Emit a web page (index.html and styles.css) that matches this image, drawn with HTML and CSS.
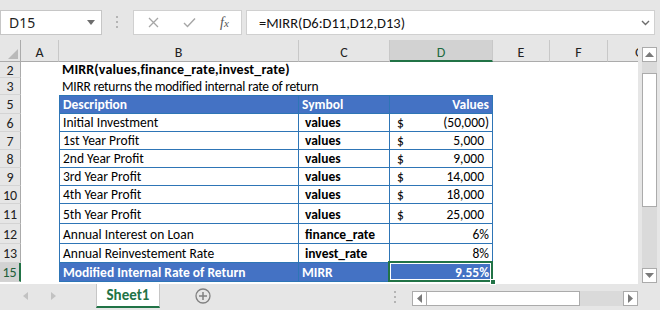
FILE: index.html
```html
<!DOCTYPE html>
<html>
<head>
<meta charset="utf-8">
<link rel="stylesheet" href="styles.css">
</head>
<body>
<div class="app">
  <div class="toolbar">
    <div class="namebox"><span>D15</span><svg width="8" height="5" viewBox="0 0 8 5"><path d="M0 0H8L4 5Z" fill="#6d6d6d"/></svg></div>
    <div class="grip"><svg width="3" height="13" viewBox="0 0 3 13"><rect x="0" y="0" width="2" height="2" fill="#b4b4b4"/><rect x="0" y="5" width="2" height="2" fill="#b4b4b4"/><rect x="0" y="10" width="2" height="2" fill="#b4b4b4"/></svg></div>
    <div class="fxbtns">
      <svg class="ico-x" width="11" height="11" viewBox="0 0 11 11"><path d="M1 1L10 10M10 1L1 10" stroke="#a6a6a6" stroke-width="1.3"/></svg>
      <svg class="ico-ok" width="13" height="11" viewBox="0 0 13 11"><path d="M1 6L4.5 9.5L12 1.5" stroke="#a6a6a6" stroke-width="1.4" fill="none"/></svg>
      <span class="fx">f<span class="fxx">x</span></span>
    </div>
    <div class="formula"><span>=MIRR(D6:D11,D12,D13)</span><svg width="9" height="6" viewBox="0 0 9 6"><path d="M1 1L4.5 4.5L8 1" stroke="#6d6d6d" stroke-width="1.4" fill="none"/></svg></div>
  </div>

  <div class="main">
    <div class="sheet">
      <div class="row hdr">
        <div class="rh corner"><svg width="10" height="10" viewBox="0 0 10 10"><path d="M10 0V10H0Z" fill="#b9b9b9"/></svg></div>
        <div class="ch ca">A</div>
        <div class="ch cb">B</div>
        <div class="ch cc">C</div>
        <div class="ch cd sel">D</div>
        <div class="ch ce">E</div>
        <div class="ch cf">F</div>
        <div class="ch cg">G</div>
      </div>

      <div class="row h16">
        <div class="rh">2</div><div class="ca"></div>
        <div class="cb c bold title t2">MIRR(values,finance_rate,invest_rate)</div>
        <div class="cc"></div><div class="cd"></div><div class="ce"></div><div class="cf"></div><div class="cg"></div>
      </div>
      <div class="row h17">
        <div class="rh">3</div><div class="ca"></div>
        <div class="cb c title t3">MIRR returns the modified internal rate of return</div>
        <div class="cc"></div><div class="cd"></div><div class="ce"></div><div class="cf"></div><div class="cg"></div>
      </div>

      <div class="row h19">
        <div class="rh">5</div><div class="ca"></div>
        <div class="cb c t top blue bold">Description</div>
        <div class="cc c t top blue bold">Symbol</div>
        <div class="cd c t top blue bold right">Values</div>
        <div class="ce"></div><div class="cf"></div><div class="cg"></div>
      </div>

      <div class="row h18">
        <div class="rh">6</div><div class="ca"></div>
        <div class="cb c t">Initial Investment</div>
        <div class="cc c t bold sym">values</div>
        <div class="cd c t acct"><span>$</span><span>(50,000)</span></div>
        <div class="ce"></div><div class="cf"></div><div class="cg"></div>
      </div>
      <div class="row h18">
        <div class="rh">7</div><div class="ca"></div>
        <div class="cb c t">1st Year Profit</div>
        <div class="cc c t bold sym">values</div>
        <div class="cd c t acct"><span>$</span><span class="pos">5,000</span></div>
        <div class="ce"></div><div class="cf"></div><div class="cg"></div>
      </div>
      <div class="row h18">
        <div class="rh">8</div><div class="ca"></div>
        <div class="cb c t">2nd Year Profit</div>
        <div class="cc c t bold sym">values</div>
        <div class="cd c t acct"><span>$</span><span class="pos">9,000</span></div>
        <div class="ce"></div><div class="cf"></div><div class="cg"></div>
      </div>
      <div class="row h18">
        <div class="rh">9</div><div class="ca"></div>
        <div class="cb c t">3rd Year Profit</div>
        <div class="cc c t bold sym">values</div>
        <div class="cd c t acct"><span>$</span><span class="pos">14,000</span></div>
        <div class="ce"></div><div class="cf"></div><div class="cg"></div>
      </div>
      <div class="row h18">
        <div class="rh">10</div><div class="ca"></div>
        <div class="cb c t">4th Year Profit</div>
        <div class="cc c t bold sym">values</div>
        <div class="cd c t acct"><span>$</span><span class="pos">18,000</span></div>
        <div class="ce"></div><div class="cf"></div><div class="cg"></div>
      </div>
      <div class="row h20">
        <div class="rh">11</div><div class="ca"></div>
        <div class="cb c t">5th Year Profit</div>
        <div class="cc c t bold sym">values</div>
        <div class="cd c t acct"><span>$</span><span class="pos">25,000</span></div>
        <div class="ce"></div><div class="cf"></div><div class="cg"></div>
      </div>
      <div class="row h20">
        <div class="rh">12</div><div class="ca"></div>
        <div class="cb c t">Annual Interest on Loan</div>
        <div class="cc c t bold sym">finance_rate</div>
        <div class="cd c t right">6%</div>
        <div class="ce"></div><div class="cf"></div><div class="cg"></div>
      </div>
      <div class="row h19">
        <div class="rh">13</div><div class="ca"></div>
        <div class="cb c t">Annual Reinvestement Rate</div>
        <div class="cc c t bold sym">invest_rate</div>
        <div class="cd c t right">8%</div>
        <div class="ce"></div><div class="cf"></div><div class="cg"></div>
      </div>
      <div class="row h19">
        <div class="rh selrow">15</div><div class="ca"></div>
        <div class="cb c t blue bold">Modified Internal Rate of Return</div>
        <div class="cc c t blue bold">MIRR</div>
        <div class="cd c t blue bold right active">9.55%<span class="selbox"></span><span class="handle"></span></div>
        <div class="ce"></div><div class="cf"></div><div class="cg"></div>
      </div>
    </div>

    <div class="vscroll">
      <div class="sbtn"><svg width="9" height="5" viewBox="0 0 9 5"><path d="M0 5H9L4.5 0Z" fill="#7a7a7a"/></svg></div>
      <div class="vtrack"><div class="vthumb"></div></div>
      <div class="sbtn"><svg width="9" height="5" viewBox="0 0 9 5"><path d="M0 0H9L4.5 5Z" fill="#7a7a7a"/></svg></div>
    </div>
  </div>

  <div class="bottom">
    <div class="nav">
      <svg width="5" height="8" viewBox="0 0 5 8"><path d="M5 0V8L0 4Z" fill="#c2c2c2"/></svg>
      <svg width="5" height="8" viewBox="0 0 5 8"><path d="M0 0V8L5 4Z" fill="#c2c2c2"/></svg>
    </div>
    <div class="tab">Sheet1</div>
    <div class="add"><svg width="16" height="16" viewBox="0 0 16 16"><circle cx="8" cy="8" r="7" fill="none" stroke="#808080" stroke-width="1.3"/><path d="M8 4V12M4 8H12" stroke="#808080" stroke-width="1.5"/></svg></div>
    <div class="hgrip"><svg width="2" height="12" viewBox="0 0 2 12"><rect x="0" y="0" width="2" height="2" fill="#b4b4b4"/><rect x="0" y="5" width="2" height="2" fill="#b4b4b4"/><rect x="0" y="10" width="2" height="2" fill="#b4b4b4"/></svg></div>
    <div class="hscroll">
      <div class="sbtn h"><svg width="5" height="9" viewBox="0 0 5 9"><path d="M5 0V9L0 4.5Z" fill="#7a7a7a"/></svg></div>
      <div class="hthumb"></div>
      <div class="htrack"></div>
      <div class="sbtn h"><svg width="5" height="9" viewBox="0 0 5 9"><path d="M0 0V9L5 4.5Z" fill="#7a7a7a"/></svg></div>
    </div>
  </div>
</div>
</body>
</html>
```

FILE: styles.css
```css
* { box-sizing: border-box; }
html, body { margin: 0; padding: 0; }
body {
  width: 660px;
  height: 310px;
  overflow: hidden;
  background: #e6e6e6;
  font-family: Carlito, Lato, "Liberation Sans", sans-serif;
  color: #000;
}
.app { display: flex; flex-direction: column; height: 310px; }

/* toolbar */
.toolbar { height: 40px; display: flex; align-items: flex-start; padding-top: 10px; }
.namebox {
  width: 102px; height: 25px; background: #fff; border: 1px solid #c6c6c6;
  display: flex; align-items: center; justify-content: space-between;
  padding: 0 6px 0 8px; font: 14px "Noto Sans", sans-serif; color: #222;
}
.grip { width: 31px; height: 25px; display: flex; align-items: center; justify-content: center; }
.fxbtns {
  width: 109px; height: 25px; background: #fff; border: 1px solid #d0d0d0;
  display: flex; align-items: center; padding-left: 14px;
}
.ico-ok { margin-left: 24px; }
.fx { margin-left: 24px; font: italic 14px "Liberation Serif", serif; color: #555; }
.fxx { font-size: 11px; }
.formula {
  margin-left: 4px; width: 409px; height: 25px; background: #fff; border: 1px solid #d0d0d0;
  display: flex; align-items: center; justify-content: space-between;
  padding: 0 4px 0 12px; font-size: 14.5px; color: #111;
}

/* main */
.main { height: 244px; display: flex; }
.sheet { width: 638px; background: #fff; }
.row { display: flex; }
.row > div { flex: none; }
.hdr { height: 22px; }
.h16 { height: 16px; }
.h17 { height: 17px; }
.h18 { height: 18px; }
.h19 { height: 19px; }
.h20 { height: 20px; }

.rh {
  width: 21px; background: #e6e6e6; border-right: 1px solid #ababab; border-bottom: 1px solid #d4d4d4;
  display: flex; align-items: center; justify-content: center; font-size: 14px; color: #222;
  padding-top: 1px;
}
.corner { align-items: flex-end; justify-content: flex-end; padding: 0 2px 2px 0; border-bottom: 1px solid #ababab; }
.ca { width: 38px; }
.cb { width: 240px; }
.cc { width: 91px; }
.cd { width: 103px; }
.ce { width: 57px; }
.cf { width: 58px; }
.cg { width: 30px; overflow: hidden; }
.ch {
  background: #e6e6e6; border-right: 1px solid #c8c8c8; border-bottom: 1px solid #ababab;
  display: flex; align-items: center; justify-content: center; font-size: 14px; color: #222;
  padding-top: 3px;
}
.ch.cg { justify-content: flex-start; padding-left: 27px; border-right: none; }
.ch.sel { background: #d2d2d2; color: #1e6b41; border-bottom: 2px solid #217346; padding-top: 4px; }
.selrow { background: #d2d2d2; border-right: 2px solid #217346; color: #1e5e3a; }

.c {
  display: flex; align-items: flex-end; padding: 0 3px 0 3px; font-size: 13.5px;
  white-space: nowrap; position: relative; line-height: 16px;
}
.title { overflow: visible; }
.t2 { font-size: 14px; letter-spacing: 0.15px; }
.t3 { letter-spacing: -0.25px; }
.bold { font-weight: bold; }
.t { border-right: 1px solid #2e75b6; border-bottom: 1px solid #2e75b6; }
.cb.t { border-left: 1px solid #2e75b6; }
.top { border-top: 1px solid #2e75b6; }
.blue { background: #4472c4; color: #fff; }
.right { justify-content: flex-end; }
.sym { padding-left: 6px; }
.acct { justify-content: space-between; padding-left: 7px; }
.pos { padding-right: 5px; }
.active { position: relative; }
.selbox {
  position: absolute; left: -2px; top: -2px; right: -1px; bottom: -1px;
  border: 2px solid #217346; box-shadow: inset 0 0 0 1px #fff;
}
.handle {
  position: absolute; right: -4px; bottom: -4px; width: 6px; height: 6px;
  background: #217346; border: 1px solid #fff;
}

/* vertical scrollbar */
.vscroll { width: 22px; display: flex; flex-direction: column; padding: 7px 3px 1px 4px; }
.sbtn {
  width: 15px; height: 15px; flex: none; background: #fff; border: 1px solid #ababab;
  display: flex; align-items: center; justify-content: center;
}
.vtrack { flex: 1; background: #dadada; padding-top: 11px; }
.vthumb { height: 134px; background: #fff; border: 1px solid #ababab; }

/* bottom */
.bottom { height: 26px; display: flex; align-items: flex-start; }
.nav { width: 96px; height: 24px; display: flex; align-items: center; padding-left: 23px; gap: 23px; }
.tab {
  width: 64px; height: 24px; background: #fff; border-left: 1px solid #c6c6c6; border-right: 1px solid #c6c6c6;
  border-bottom: 2px solid #217346; color: #217346; font-weight: bold; font-size: 15px;
  display: flex; align-items: center; justify-content: center;
}
.add { margin-left: 35px; height: 24px; display: flex; align-items: center; }
.hgrip { margin-left: 183px; height: 24px; display: flex; align-items: center; padding-top: 2px; }
.hscroll { margin-left: 16px; margin-top: 7px; width: 226px; height: 15px; display: flex; }
.hthumb { width: 153px; background: #fff; border: 1px solid #ababab; border-left: none; }
.htrack { flex: 1; background: #dadada; }
.sbtn.h { width: 15px; height: 15px; }
```
